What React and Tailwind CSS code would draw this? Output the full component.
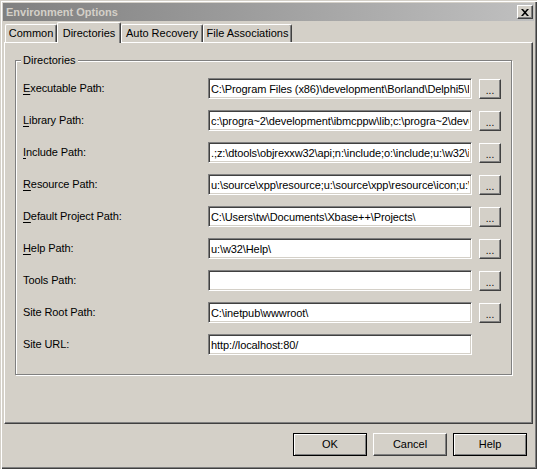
import React from 'react';

const FONT = "font-['Liberation_Sans',Arial,sans-serif]";

const rows = [
  { label: 'Executable Path:', key: 'E', value: 'C:\\Program Files (x86)\\development\\Borland\\Delphi5\\Imports;c:\\progra~2', browse: true },
  { label: 'Library Path:', key: 'L', value: 'c:\\progra~2\\development\\ibmcppw\\lib;c:\\progra~2\\development', browse: true },
  { label: 'Include Path:', key: 'I', value: '.;z:\\dtools\\objrexxw32\\api;n:\\include;o:\\include;u:\\w32\\include', browse: true },
  { label: 'Resource Path:', key: 'R', value: 'u:\\source\\xpp\\resource;u:\\source\\xpp\\resource\\icon;u:\\source', browse: true },
  { label: 'Default Project Path:', key: 'D', value: 'C:\\Users\\tw\\Documents\\Xbase++\\Projects\\', browse: true },
  { label: 'Help Path:', key: 'H', value: 'u:\\w32\\Help\\', browse: true },
  { label: 'Tools Path:', key: null, value: '', browse: true },
  { label: 'Site Root Path:', key: null, value: 'C:\\inetpub\\wwwroot\\', browse: true },
  { label: 'Site URL:', key: null, value: 'http://localhost:80/', browse: false },
];

const tabs = [
  { name: 'Common', w: 'w-[52px]' },
  { name: 'Directories', w: 'w-[64px]', active: true },
  { name: 'Auto Recovery', w: 'w-[82px]' },
  { name: 'File Associations', w: 'w-[89px]' },
];

// first letter underlined as the keyboard accelerator
const Label = ({ text, accel }) => {
  if (!accel) return <span>{text}</span>;
  return (
    <span>
      <span className="underline underline-offset-[2px]">{text[0]}</span>
      {text.slice(1)}
    </span>
  );
};

const Raised = ({ className = '', children }) => (
  <button
    type="button"
    className={`flex items-center justify-center bg-[#d4d0c8] border border-t-white border-l-white border-r-[#404040] border-b-[#404040] shadow-[inset_-1px_-1px_#808080] ${className}`}
  >
    {children}
  </button>
);

const DialogButton = ({ children, strong }) => (
  <button
    type="button"
    className={
      strong
        ? 'w-[74px] h-[23px] bg-[#d4d0c8] border border-black shadow-[inset_1px_1px_#fff,inset_-1px_-1px_#808080] text-[11px] text-black'
        : 'w-[74px] h-[23px] bg-[#d4d0c8] border border-t-white border-l-white border-r-[#404040] border-b-[#404040] shadow-[inset_-1px_-1px_#808080] text-[11px] text-black'
    }
  >
    {children}
  </button>
);

const PathRow = ({ row }) => (
  <div className="flex items-center h-[21px]">
    <div className="w-[185px] text-[11px] tracking-[-0.1px] text-black">
      <Label text={row.label} accel={row.key} />
    </div>
    <input
      readOnly
      defaultValue={row.value}
      className="w-[264px] h-[21px] px-[2px] bg-white text-[11px] tracking-[-0.1px] text-black outline-none border border-t-[#808080] border-l-[#808080] border-r-white border-b-white shadow-[inset_1px_1px_#404040,inset_-1px_-1px_#d4d0c8]"
    />
    {row.browse && (
      <Raised className="ml-[7px] w-[22px] h-[20px] text-[10px] leading-none pt-[5px]">...</Raised>
    )}
  </div>
);

export default function App() {
  return (
    <div
      className={`${FONT} w-[537px] h-[469px] bg-[#d4d0c8] p-[3px] flex flex-col shadow-[inset_1px_1px_#d4d0c8,inset_2px_2px_#fff,inset_-1px_-1px_#404040,inset_-2px_-2px_#808080]`}
    >
      {/* inactive caption bar */}
      <div className="h-[18px] flex items-center justify-between pl-[3px] pr-[1px] bg-gradient-to-r from-[#808080] to-[#c0c0c0]">
        <span className="text-[11px] font-bold text-[#d4d0c8]">Environment Options</span>
        <Raised className="w-[16px] h-[14px]">
          <svg width="8" height="7" viewBox="0 0 8 7">
            <path d="M0 0h2l2 2.3L6 0h2L5 3.5 8 7H6L4 4.7 2 7H0l3-3.5z" fill="#000" />
          </svg>
        </Raised>
      </div>

      <div className="mt-[1px] px-[1px] flex flex-col">
        {/* tab strip */}
        <div className="h-[20px] flex items-end pl-[1px]">
          {tabs.map((t) =>
            t.active ? (
              <div
                key={t.name}
                className={`${t.w} h-[21px] -mb-px relative z-10 bg-[#d4d0c8] rounded-t-[2px] border-t border-l border-white border-r border-r-[#404040] shadow-[inset_-1px_0_#808080] flex items-start justify-center pt-[2px] text-[11px] text-black`}
              >
                {t.name}
              </div>
            ) : (
              <div
                key={t.name}
                className={`${t.w} h-[18px] bg-[#d4d0c8] rounded-t-[2px] border-t border-l border-white border-r border-r-[#404040] shadow-[inset_-1px_0_#808080] flex items-center justify-center text-[11px] text-black`}
              >
                {t.name}
              </div>
            )
          )}
        </div>

        {/* tab page */}
        <div className="h-[382px] border border-t-white border-l-white border-r-[#404040] border-b-[#404040] shadow-[inset_-1px_-1px_#808080] pl-[10px] pt-[17px]">
          <div className="relative w-[497px] h-[315px] border border-[#808080] shadow-[inset_1px_1px_#fff,1px_1px_#fff] pl-[7px] pt-[17px]">
            <span className="absolute left-[5px] -top-[8px] px-[2px] bg-[#d4d0c8] text-[11px] leading-[14px] text-black">
              Directories
            </span>
            <div className="flex flex-col gap-[11px]">
              {rows.map((r) => (
                <PathRow key={r.label} row={r} />
              ))}
            </div>
          </div>
        </div>
      </div>

      <div className="mt-[9px] flex justify-end gap-[6px] pr-[7px]">
        <DialogButton strong>OK</DialogButton>
        <DialogButton>Cancel</DialogButton>
        <DialogButton strong>Help</DialogButton>
      </div>
    </div>
  );
}
